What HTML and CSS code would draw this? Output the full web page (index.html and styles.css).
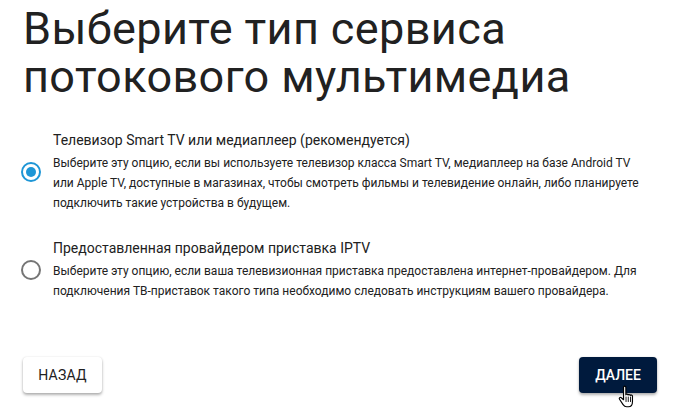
FILE: index.html
```html
<!DOCTYPE html>
<html lang="ru">
<head>
<meta charset="utf-8">
<title>Выберите тип сервиса</title>
<link rel="stylesheet" href="styles.css">
</head>
<body>
<main class="page">
  <h1 class="title">Выберите тип сервиса потокового мультимедиа</h1>
  <div class="options">
    <label class="option">
      <span class="radio radio-on"></span>
      <span class="text">
        <span class="name">Телевизор Smart TV или медиаплеер (рекомендуется)</span>
        <span class="desc">Выберите эту опцию, если вы используете телевизор класса Smart TV, медиаплеер на базе Android TV или Apple TV, доступные в магазинах, чтобы смотреть фильмы и телевидение онлайн, либо планируете подключить такие устройства в будущем.</span>
      </span>
    </label>
    <label class="option">
      <span class="radio"></span>
      <span class="text">
        <span class="name">Предоставленная провайдером приставка IPTV</span>
        <span class="desc">Выберите эту опцию, если ваша телевизионная приставка предоставлена интернет-провайдером. Для подключения ТВ-приставок такого типа необходимо следовать инструкциям вашего провайдера.</span>
      </span>
    </label>
  </div>
  <div class="actions">
    <button class="btn btn-back">НАЗАД</button>
    <button class="btn btn-next">ДАЛЕЕ
      <svg class="cursor" width="20" height="25" viewBox="0 0 22 28">
        <path d="M6 2.500c0-1.600 2.600-1.600 2.600 0V11c0-1 2.500-1 2.500.3 0-1 2.500-1 2.500.4 0-.9 2.400-.8 2.400.7v6c0 3-1.400 6-4.500 6H9.500c-2 0-3-1-4-2.500L1.500 16c-1-1.500.8-2.800 2-1.700L6 16.500z" fill="#fff" stroke="#000" stroke-width="1.300" stroke-linejoin="round"/>
        <path d="M8.800 13v6M11.300 13v6M13.800 13v6" stroke="#000" stroke-width="1"/>
      </svg>
    </button>
  </div>
</main>
</body>
</html>
```

FILE: styles.css
```css
* { box-sizing: border-box; }
html, body { margin: 0; padding: 0; background: #fff; }
body { width: 677px; height: 420px; overflow: hidden; font-family: Roboto, "Liberation Sans", sans-serif; color: #212121; }
.page { padding: 5px 20px 0 23px; display: flex; flex-direction: column; height: 420px; }
.title { margin: 0; font-size: 45px; font-weight: 400; line-height: 48px; letter-spacing: 0.4px; width: 620px; color: #212121; }
.options { margin-top: 29px; display: flex; flex-direction: column; gap: 25px; }
.option { display: flex; align-items: center; }
.radio { flex: none; width: 20px; height: 20px; margin-right: 12px; margin-left: -2px; border: 2px solid #757575; border-radius: 50%; position: relative; }
.radio-on { border-color: #1e96d6; }
.radio-on::after { content: ""; position: absolute; left: 3px; top: 3px; width: 10px; height: 10px; border-radius: 50%; background: #1e96d6; }
.text { display: flex; flex-direction: column; }
.name { font-size: 14px; line-height: 20px; color: #212121; }
.desc { font-size: 12px; line-height: 20px; color: #212121; width: 600px; margin-top: 3px; }
.actions { margin-top: auto; margin-bottom: 27px; display: flex; justify-content: space-between; }
.btn { position: relative; height: 36px; border: none; border-radius: 4px; font-family: inherit; font-size: 14px; font-weight: 500; box-shadow: 0 2px 3px rgba(0,0,0,.3), 0 0 2px rgba(0,0,0,.1); }
.btn-back { width: 79px; background: #fff; color: #212121; font-weight: 400; letter-spacing: 0.2px; }
.btn-next { width: 78px; background: #001a3d; color: #fff; }
.cursor { position: absolute; left: 39px; top: 28px; }
```
